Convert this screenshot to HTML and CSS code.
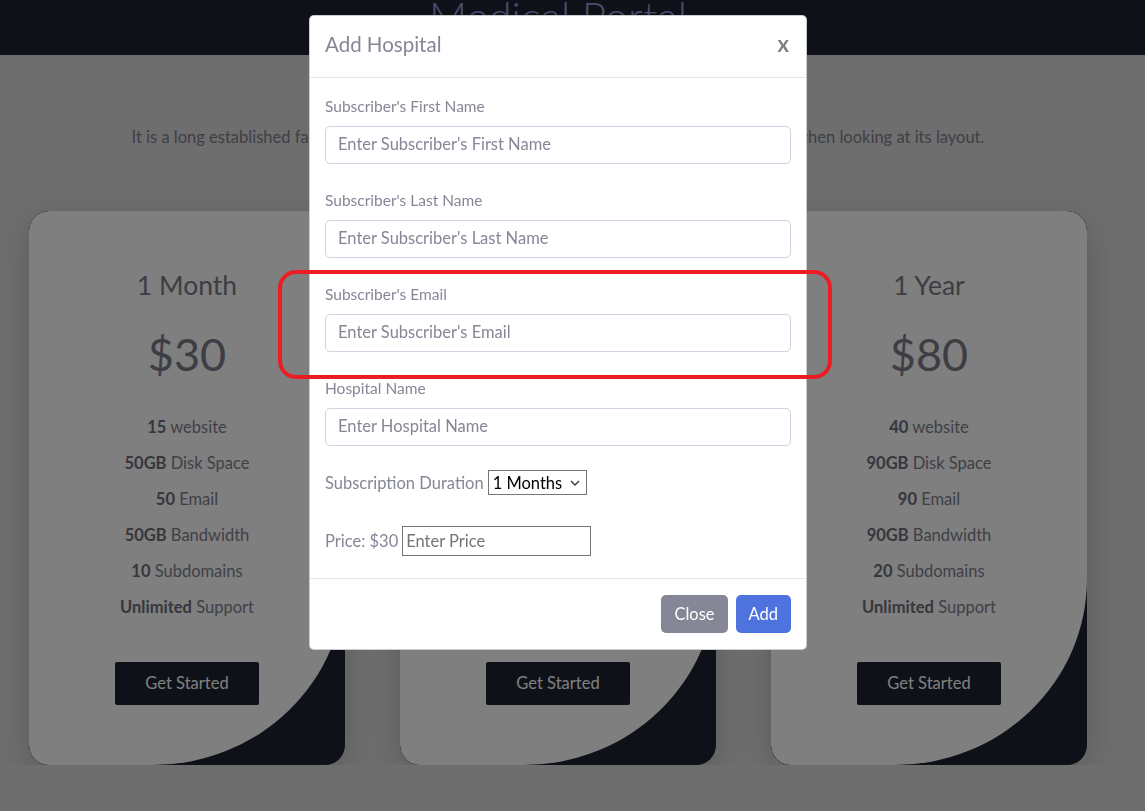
FILE: index.html
```html
<!DOCTYPE html>
<html lang="en">
<head>
<meta charset="utf-8">
<title>Medical Portal</title>
<link rel="stylesheet" href="styles.css">
</head>
<body>
<header class="topbar">
  <div class="topbar-inner">
    <h1 class="brand">Medical Portal</h1>
  </div>
</header>
<section class="pricing">
  <p class="intro">It is a long established fact that a reader will be distracted by the readable content of a page when looking at its layout.</p>
  <div class="plans">
    <div class="plan">
      <h3 class="plan-name">1 Month</h3>
      <div class="plan-price">$30</div>
      <ul class="features">
        <li><b>15</b> website</li>
        <li><b>50GB</b> Disk Space</li>
        <li><b>50</b> Email</li>
        <li><b>50GB</b> Bandwidth</li>
        <li><b>10</b> Subdomains</li>
        <li><b>Unlimited</b> Support</li>
      </ul>
      <a class="btn-start">Get Started</a>
    </div>
    <div class="plan">
      <h3 class="plan-name">6 Months</h3>
      <div class="plan-price">$50</div>
      <ul class="features">
        <li><b>25</b> website</li>
        <li><b>70GB</b> Disk Space</li>
        <li><b>70</b> Email</li>
        <li><b>70GB</b> Bandwidth</li>
        <li><b>15</b> Subdomains</li>
        <li><b>Unlimited</b> Support</li>
      </ul>
      <a class="btn-start">Get Started</a>
    </div>
    <div class="plan">
      <h3 class="plan-name">1 Year</h3>
      <div class="plan-price">$80</div>
      <ul class="features">
        <li><b>40</b> website</li>
        <li><b>90GB</b> Disk Space</li>
        <li><b>90</b> Email</li>
        <li><b>90GB</b> Bandwidth</li>
        <li><b>20</b> Subdomains</li>
        <li><b>Unlimited</b> Support</li>
      </ul>
      <a class="btn-start">Get Started</a>
    </div>
  </div>
</section>

<div class="backdrop"></div>

<div class="modal-wrap">
  <div class="modal">
    <div class="modal-header">
      <h5 class="modal-title">Add Hospital</h5>
      <span class="close">x</span>
    </div>
    <div class="modal-body">
      <div class="form-group">
        <label class="form-label">Subscriber's First Name</label>
        <input class="form-control" type="text" placeholder="Enter Subscriber's First Name">
      </div>
      <div class="form-group">
        <label class="form-label">Subscriber's Last Name</label>
        <input class="form-control" type="text" placeholder="Enter Subscriber's Last Name">
      </div>
      <div class="form-group">
        <label class="form-label">Subscriber's Email</label>
        <input class="form-control" type="text" placeholder="Enter Subscriber's Email">
      </div>
      <div class="form-group">
        <label class="form-label">Hospital Name</label>
        <input class="form-control" type="text" placeholder="Enter Hospital Name">
      </div>
      <div class="inline-row duration-row">
        <span>Subscription Duration</span>
        <span class="select-wrap">
          <select class="duration">
            <option>1 Months</option>
            <option>6 Months</option>
            <option>12 Months</option>
          </select>
          <svg class="chev" width="10" height="6" viewBox="0 0 10 6"><path d="M1 1 L5 5 L9 1" fill="none" stroke="#333" stroke-width="1.3"/></svg>
        </span>
      </div>
      <div class="inline-row price-row">
        <span>Price: $30</span>
        <input class="price-input" type="text" placeholder="Enter Price">
      </div>
    </div>
    <div class="modal-footer">
      <button class="btn btn-secondary">Close</button>
      <button class="btn btn-primary">Add</button>
    </div>
  </div>
</div>

<div class="highlight"></div>
</body>
</html>
```
FILE: styles.css
```css
* { box-sizing: border-box; }

html, body {
  margin: 0;
  padding: 0;
}

body {
  font-family: "Lato", "Noto Sans", sans-serif;
  font-size: 16.5px;
  color: #858796;
  background: #dddddd;
  overflow: hidden;
}

.topbar {
  height: 55px;
  background: #1c2231;
  overflow: hidden;
}

.topbar-inner {
  width: 1116px;
  display: flex;
  justify-content: center;
}

.brand {
  margin: -4px 0 0;
  font-size: 42px;
  line-height: 40px;
  font-weight: 300;
  color: #9599d4;
}

.pricing {
  width: 1116px;
  display: flex;
  flex-direction: column;
  align-items: center;
}

.intro {
  margin: 70px 0 0;
  line-height: 24px;
  color: #7e7f8d;
}

.plans {
  margin-top: 62px;
  display: flex;
  gap: 55px;
}

.plan {
  position: relative;
  width: 316px;
  height: 554px;
  border-radius: 20px;
  background: #1c2231;
  display: flex;
  flex-direction: column;
  align-items: center;
  padding-top: 58px;
  box-shadow: 0 10px 35px rgba(0, 0, 0, 0.18);
  overflow: hidden;
}

.plan::before {
  content: "";
  position: absolute;
  inset: 0;
  background: #ffffff;
  border-radius: 20px 20px 192px 20px / 20px 20px 186px 20px;
}

.plan > * {
  position: relative;
}

.plan-name {
  margin: 0;
  font-size: 26.5px;
  line-height: 32px;
  font-weight: 400;
  color: #7a7b89;
}

.plan-price {
  margin-top: 27px;
  font-size: 45px;
  line-height: 53px;
  color: #7a7b89;
}

.features {
  list-style: none;
  margin: 28px 0 0;
  padding: 0;
  text-align: center;
  color: #7e7f8d;
}

.features li {
  line-height: 36px;
}

.features b {
  font-weight: 700;
  color: #6c6d7a;
}

.btn-start {
  margin-top: 37px;
  display: block;
  background: #1c2231;
  color: #ffffff;
  padding: 9px 30px;
  line-height: 25px;
  border-radius: 2px;
  font-size: 16.5px;
}

.backdrop {
  position: fixed;
  inset: 0;
  background: rgba(0, 0, 0, 0.5);
}

.modal-wrap {
  position: fixed;
  top: 15px;
  left: 0;
  width: 1116px;
  display: flex;
  justify-content: center;
}

.modal {
  width: 498px;
  background: #ffffff;
  border: 1px solid rgba(0, 0, 0, 0.2);
  border-radius: 5px;
  display: flex;
  flex-direction: column;
}

.modal-header {
  display: flex;
  justify-content: space-between;
  align-items: center;
  padding: 13px 15px 18px 15px;
  border-bottom: 1px solid #e3e6f0;
}

.modal-title {
  margin: 0;
  font-size: 20.5px;
  line-height: 30px;
  font-weight: 400;
  color: #858796;
}

.close {
  font-size: 22px;
  font-weight: 700;
  color: #000;
  opacity: 0.5;
  line-height: 30px;
  padding-right: 2px;
}

.modal-body {
  padding: 16px 15px 22px 15px;
}

.form-group {
  display: flex;
  flex-direction: column;
  margin-bottom: 24px;
}

.form-label {
  font-size: 15.5px;
  line-height: 24px;
  margin-bottom: 8px;
  color: #858796;
}

.form-control {
  height: 38px;
  padding: 5px 12px 7px;
  font-family: inherit;
  font-size: 16.5px;
  line-height: 24px;
  color: #6e707e;
  border: 1px solid #d1d3e2;
  border-radius: 5px;
  background: #fff;
  outline: none;
}

.form-control::placeholder {
  color: #858796;
  opacity: 1;
}

.inline-row {
  display: flex;
  align-items: center;
  gap: 4px;
  font-size: 16.5px;
  color: #858796;
}

.duration-row {
  height: 25px;
}

.select-wrap {
  position: relative;
  display: inline-flex;
}

.duration {
  appearance: none;
  -webkit-appearance: none;
  height: 25px;
  width: 99px;
  font-family: inherit;
  font-size: 16.5px;
  color: #000;
  border: 1px solid #767676;
  border-radius: 0;
  background: #fff;
  padding: 0 4px;
}

.chev {
  position: absolute;
  right: 7px;
  top: 10px;
  pointer-events: none;
}

.price-row {
  margin-top: 31px;
  height: 30px;
}

.price-input {
  width: 189px;
  height: 30px;
  font-family: inherit;
  font-size: 16.5px;
  padding: 1px 3px;
  border: 1px solid #767676;
  outline: none;
}

.price-input::placeholder {
  color: #757575;
}

.modal-footer {
  display: flex;
  justify-content: flex-end;
  gap: 8px;
  padding: 16px 15px 16px;
  border-top: 1px solid #e3e6f0;
}

.btn {
  font-family: inherit;
  font-size: 16.5px;
  line-height: 24px;
  padding: 6px 12px;
  border: 1px solid transparent;
  border-radius: 5px;
  color: #fff;
}

.btn-secondary {
  background: #858796;
}

.btn-primary {
  background: #4e73df;
}

.highlight {
  position: fixed;
  left: 278px;
  top: 270px;
  width: 554px;
  height: 109px;
  border: 4px solid #ec1c24;
  border-radius: 18px;
  pointer-events: none;
}
```
